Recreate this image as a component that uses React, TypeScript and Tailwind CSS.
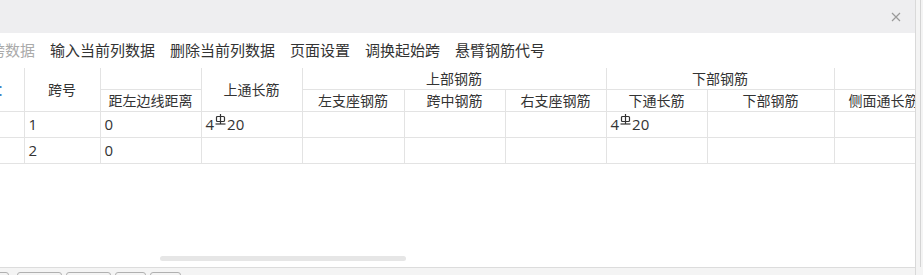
import React from "react";

const cjk = { fontFamily: '"Noto Sans CJK SC", "Noto Sans", sans-serif' };

// HRB400 rebar grade glyph
const RebarMark = () => (
  <svg width="11" height="13" viewBox="0 0 11 13" className="inline-block align-top mt-[1px] mx-[1px]">
    <rect x="1.5" y="2.5" width="8" height="5" rx="1" fill="none" stroke="#333" strokeWidth="1.2" />
    <line x1="5.5" y1="0" x2="5.5" y2="10" stroke="#333" strokeWidth="1.2" />
    <line x1="0.5" y1="10" x2="10.5" y2="10" stroke="#333" strokeWidth="1.2" />
  </svg>
);

const Rebar = ({ n, d }: { n: number; d: number }) => (
  <span className="whitespace-nowrap">
    {n}
    <RebarMark />
    {d}
  </span>
);

const toolItems = ["输入当前列数据", "删除当前列数据", "页面设置", "调换起始跨", "悬臂钢筋代号"];

const rows = [
  { no: "1", dist: "0", top: true, bottom: true },
  { no: "2", dist: "0", top: false, bottom: false },
];

const th = "border border-[#e3e3e3] font-normal text-[#333] text-center p-0 whitespace-nowrap overflow-hidden";
const td = "border border-[#e3e3e3] text-[#333] text-left px-1 p-0 whitespace-nowrap overflow-hidden";

export default function App() {
  return (
    <div className="w-[923px] h-[275px] overflow-hidden bg-[#f4f4f4] flex text-[14px]" style={cjk}>
      <div className="w-[916px] flex flex-col border-r border-[#d9d9d9] bg-white">
        {/* title bar */}
        <div className="h-[33px] bg-[#eeeef0] flex items-center justify-end pr-[14px]">
          <svg width="10" height="10" viewBox="0 0 10 10">
            <path d="M1 1L9 9M9 1L1 9" stroke="#9a9a9a" strokeWidth="1.2" />
          </svg>
        </div>

        {/* toolbar */}
        <div className="h-[35px] flex items-center gap-[15px] text-[15px] text-[#333] overflow-hidden">
          <span className="ml-[-40px] text-[#aaa] whitespace-nowrap">复制跨数据</span>
          {toolItems.map((t) => (
            <span key={t} className="whitespace-nowrap">{t}</span>
          ))}
        </div>

        {/* grid */}
        <div className="flex-1 relative overflow-hidden">
          <table className="table-fixed border-collapse w-[1000px] -mt-px">
            <colgroup>
              <col className="w-[24px]" />
              <col className="w-[76px]" />
              <col className="w-[101px]" />
              <col className="w-[101px]" />
              <col className="w-[102px]" />
              <col className="w-[101px]" />
              <col className="w-[101px]" />
              <col className="w-[101px]" />
              <col className="w-[127px]" />
              <col className="w-[166px]" />
            </colgroup>
            <thead>
              <tr className="h-[22px]">
                <th rowSpan={2} className={th + " border-l-0 text-left"}>
                  <span className="text-[#3b82c4] ml-[-3px]">：</span>
                </th>
                <th rowSpan={2} className={th}>跨号</th>
                <th className={th}></th>
                <th rowSpan={2} className={th}>上通长筋</th>
                <th colSpan={3} className={th}>上部钢筋</th>
                <th colSpan={2} className={th}>下部钢筋</th>
                <th className={th}></th>
              </tr>
              <tr className="h-[21px]">
                <th className={th}>距左边线距离</th>
                <th className={th}>左支座钢筋</th>
                <th className={th}>跨中钢筋</th>
                <th className={th}>右支座钢筋</th>
                <th className={th}>下通长筋</th>
                <th className={th}>下部钢筋</th>
                <th className={th + " text-left pl-[14px]"}>侧面通长筋</th>
              </tr>
            </thead>
            <tbody className="font-['Open_Sans','Noto_Sans_CJK_SC',sans-serif] text-[15px]">
              {rows.map((r) => (
                <tr key={r.no} className="h-[26px]">
                  <td className={td + " border-l-0"}></td>
                  <td className={td}>{r.no}</td>
                  <td className={td}>{r.dist}</td>
                  <td className={td}>{r.top && <Rebar n={4} d={20} />}</td>
                  <td className={td}></td>
                  <td className={td}></td>
                  <td className={td}></td>
                  <td className={td}>{r.bottom && <Rebar n={4} d={20} />}</td>
                  <td className={td}></td>
                  <td className={td}></td>
                </tr>
              ))}
            </tbody>
          </table>
          {/* horizontal scrollbar thumb */}
          <div className="absolute left-[160px] bottom-[6px] w-[246px] h-[5px] rounded-full bg-[#e6e6e6]" />
        </div>

        {/* footer buttons */}
        <div className="h-[8px] bg-[#f4f4f4] border-t border-[#dcdcdc] flex items-start gap-[4px] pt-[4px] overflow-hidden">
          <div className="ml-[-10px] w-[19px] h-[10px] border border-[#b0b0b0] rounded-[3px]" />
          <div className="ml-[4px] w-[45px] h-[10px] border border-[#b0b0b0] rounded-[3px]" />
          <div className="w-[45px] h-[10px] border border-[#b0b0b0] rounded-[3px]" />
          <div className="w-[31px] h-[10px] border border-[#b0b0b0] rounded-[3px]" />
          <div className="w-[31px] h-[10px] border border-[#b0b0b0] rounded-[3px]" />
        </div>
      </div>
      <div className="w-[4px]" />
      <div className="w-px h-[267px] bg-[#d4d4d4]" />
    </div>
  );
}
